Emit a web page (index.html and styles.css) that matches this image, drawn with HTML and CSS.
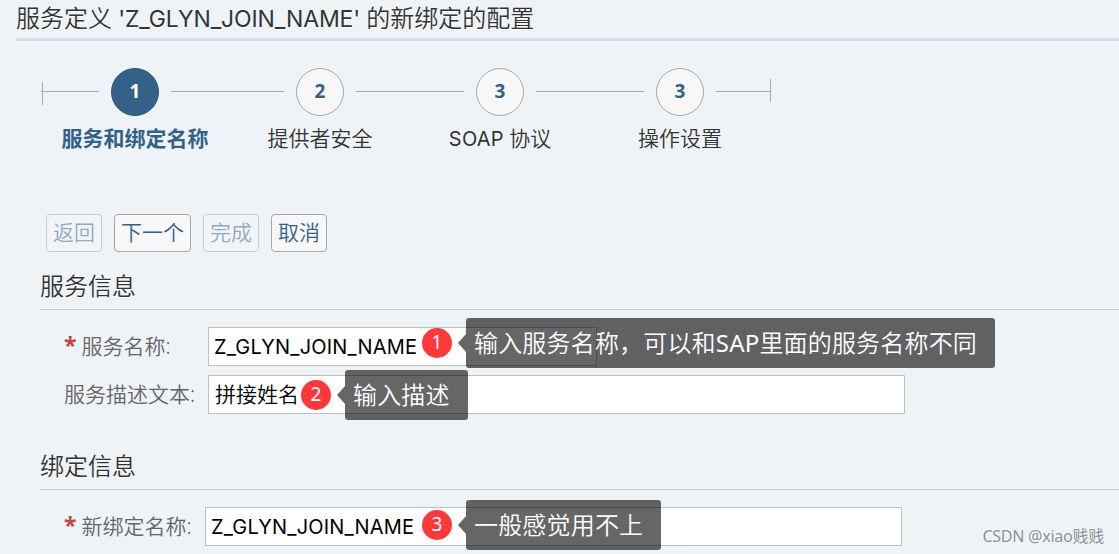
FILE: index.html
```html
<!DOCTYPE html>
<html lang="zh-CN">
<head>
    <meta charset="UTF-8">
    <title>服务定义配置</title>
    <link rel="stylesheet" href="styles.css">
</head>
<body>
    <h1 class="page-title"><span>服务定义 </span><span class="title-name">'Z_GLYN_JOIN_NAME'</span><span> 的新绑定的配置</span></h1>

    <div class="roadmap">
        <div class="line line-start"></div>
        <div class="step active">
            <div class="circle">1</div>
            <div class="step-label">服务和绑定名称</div>
        </div>
        <div class="line line-first"></div>
        <div class="step">
            <div class="circle">2</div>
            <div class="step-label">提供者安全</div>
        </div>
        <div class="line"></div>
        <div class="step">
            <div class="circle">3</div>
            <div class="step-label"><span class="latin">SOAP</span> 协议</div>
        </div>
        <div class="line"></div>
        <div class="step">
            <div class="circle">3</div>
            <div class="step-label">操作设置</div>
        </div>
        <div class="line line-end"></div>
    </div>

    <div class="toolbar">
        <button class="button" disabled>返回</button>
        <button class="button">下一个</button>
        <button class="button" disabled>完成</button>
        <button class="button">取消</button>
    </div>

    <div class="section">
        <h2>服务信息</h2>
        <div class="row">
            <div class="label"><span class="required">*</span>服务名称:</div>
            <div class="field short"><span class="latin">Z_GLYN_JOIN_NAME</span></div>
            <div class="note note-name">
                <span class="badge">1</span>
                <span class="bubble">输入服务名称，可以和<span class="sap">SAP</span>里面的服务名称不同</span>
            </div>
        </div>
        <div class="row">
            <div class="label">服务描述文本:</div>
            <div class="field">拼接姓名</div>
            <div class="note note-text">
                <span class="badge">2</span>
                <span class="bubble">输入描述</span>
            </div>
        </div>
    </div>

    <div class="section binding">
        <h2>绑定信息</h2>
        <div class="row">
            <div class="label"><span class="required">*</span>新绑定名称:</div>
            <div class="field"><span class="latin">Z_GLYN_JOIN_NAME</span></div>
            <div class="note note-binding">
                <span class="badge">3</span>
                <span class="bubble">一般感觉用不上</span>
            </div>
        </div>
    </div>

    <div class="watermark">CSDN @xiao贱贱</div>
</body>
</html>
```
FILE: styles.css
```css
* {
    box-sizing: border-box;
}
body {
    position: relative;
    width: 1119px;
    height: 554px;
    margin: 0;
    overflow: hidden;
    background: #eef3f8;
    color: #333;
    font-family: "Noto Sans", "Noto Sans CJK SC", sans-serif;
    font-size: 21px;
    font-weight: 350;
}
.latin, .title-name {
    font-family: Inter, "Noto Sans", sans-serif;
    font-weight: 400;
}
.latin {
    font-size: 20px;
    letter-spacing: 0.2px;
}
.title-name {
    font-size: 23px;
    letter-spacing: -0.12px;
}
.page-title {
    height: 41px;
    margin: 0 0 0 16px;
    border-bottom: 3px solid #d1e0ee;
    font-size: 24px;
    font-weight: 350;
    line-height: 36px;
    white-space: pre;
    text-shadow: 0 1px #fff;
}

/* Steps */
.roadmap {
    display: flex;
    height: 173px;
    padding: 27px 0 0 41px;
}
.line {
    width: 108px;
    height: 1px;
    margin-top: 23px;
    background: #a9a9a9;
}
.line-start, .line-end {
    display: flex;
    align-items: center;
    height: 23px;
    margin-top: 12px;
    background: linear-gradient(#a9a9a9, #a9a9a9) 0 11px / 100% 1px no-repeat;
}
.line-start {
    width: 58px;
    padding-left: 1px;
}
.line-start::before, .line-end::after {
    content: "";
    width: 1px;
    height: 23px;
    background: #a9a9a9;
}
.line-start::before {
    transform: translateY(2px);
}
.line-end {
    width: 55px;
    justify-content: flex-end;
}
.line-end::after {
    transform: translateY(-1px);
}
.line-first {
    width: 113px;
}
.step {
    display: flex;
    flex-direction: column;
    align-items: center;
    width: 72px;
}
.circle {
    width: 48px;
    height: 48px;
    border: 1px solid #a9a9a9;
    border-radius: 50%;
    background: #f7f7f7;
    color: #346187;
    font-size: 19px;
    font-weight: 700;
    line-height: 44px;
    text-align: center;
}
.step-label {
    margin-top: 6px;
    line-height: 32px;
    white-space: nowrap;
}
.active .circle {
    border-color: #2d587c;
    background: #346187;
    color: #fff;
}
.active .step-label {
    color: #346187;
    font-weight: 700;
}

/* Buttons */
.toolbar {
    display: flex;
    gap: 12px;
    padding-left: 46px;
}
.button {
    height: 38px;
    padding: 0 6px 2px;
    border: 1px solid #a5a7a9;
    border-radius: 4px;
    background: #f7f7f7;
    color: #346187;
    font: inherit;
    line-height: 34px;
}
.button:disabled {
    opacity: 0.5;
}

/* Form */
.section {
    margin-left: 40px;
}
.section h2 {
    height: 58px;
    margin: 0 0 17px;
    border-bottom: 1px solid #c8cdd1;
    font-size: 24px;
    font-weight: 350;
    line-height: 67px;
    text-shadow: 0 1px #fff;
}
.binding h2 {
    height: 67px;
    line-height: 85px;
}
.row {
    position: relative;
    display: flex;
    height: 39px;
    margin-bottom: 9px;
    padding-left: 24px;
}
.label {
    width: 144px;
    color: #666;
    line-height: 38px;
    white-space: nowrap;
}
.binding .label {
    width: 141px;
}
.required {
    margin-right: 5px;
    color: #c14646;
    font-size: 23px;
    font-weight: 700;
    line-height: 1;
}
.field {
    width: 697px;
    padding-left: 6px;
    border: 1px solid #bfbfbf;
    background: #fff;
    color: #000;
    line-height: 37px;
}
.field .latin {
    margin-left: -1px;
}
.short {
    width: 389px;
}

/* Numbered notes over the fields */
.note {
    position: absolute;
    display: flex;
    align-items: center;
    gap: 14px;
    height: 50px;
}
.note-name {
    top: -9px;
    left: 382px;
}
.note-text {
    top: -5px;
    left: 261px;
}
.note-binding {
    top: -7px;
    left: 382px;
}
.badge {
    width: 30px;
    height: 30px;
    border-radius: 50%;
    background: #fc3838;
    color: #fff;
    font-size: 19px;
    font-weight: 400;
    line-height: 28px;
    text-align: center;
}
.bubble {
    position: relative;
    height: 50px;
    padding: 0 18px 0 8px;
    border-radius: 3px;
    background: rgba(0, 0, 0, 0.6);
    color: #fff;
    font-size: 24px;
    letter-spacing: 0.18px;
    line-height: 50px;
    white-space: nowrap;
}
.bubble::before {
    content: "";
    position: absolute;
    top: 16px;
    left: -8px;
    border: solid transparent;
    border-width: 9px 8px 9px 0;
    border-right-color: rgba(0, 0, 0, 0.6);
}
.sap {
    font-weight: 400;
}
.watermark {
    position: absolute;
    right: 15px;
    bottom: 6px;
    color: #8d9195;
    font-size: 16px;
    font-weight: 400;
    letter-spacing: -0.25px;
    line-height: 24px;
    text-shadow: -1px -1px rgba(255, 255, 255, 0.7);
}
```
